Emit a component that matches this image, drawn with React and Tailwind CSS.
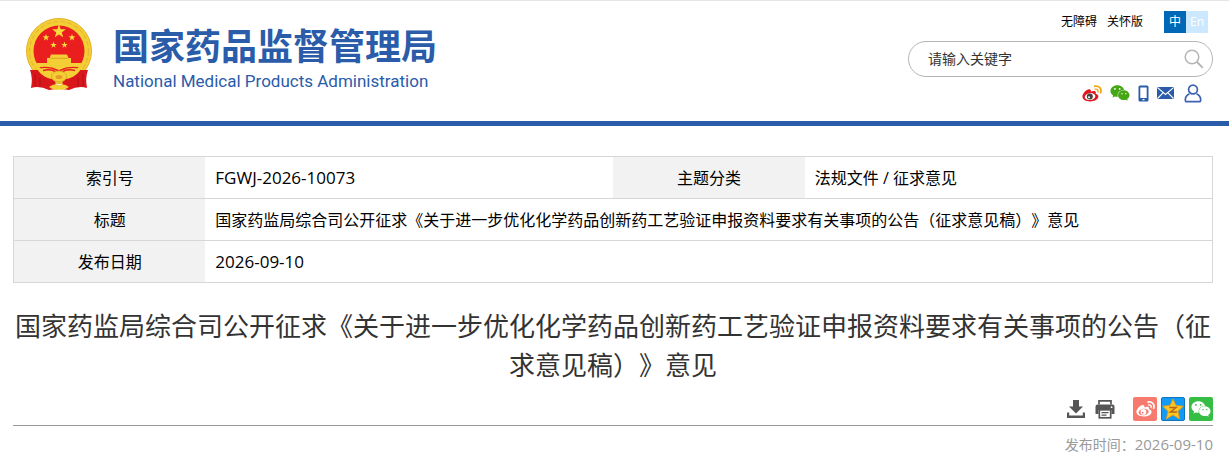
import { FaWeixin } from 'react-icons/fa';

const TITLE = '国家药监局综合司公开征求《关于进一步优化化学药品创新药工艺验证申报资料要求有关事项的公告（征求意见稿）》意见';

const starPoints = (cx, cy, r) =>
  Array.from({ length: 10 }, (_, i) => {
    const radius = i % 2 === 0 ? r : r * 0.4;
    const angle = (Math.PI / 5) * i - Math.PI / 2;
    return `${(cx + radius * Math.cos(angle)).toFixed(2)},${(cy + radius * Math.sin(angle)).toFixed(2)}`;
  }).join(' ');

const Emblem = () => (
  <svg viewBox="0 0 68 74" className="w-[68px] h-[74px] shrink-0" aria-hidden="true">
    <circle cx="34" cy="34" r="32.5" fill="#f3cf35" stroke="#e3b02a" strokeWidth="1" />
    <circle cx="34" cy="34" r="29.5" fill="none" stroke="#e6b92f" strokeWidth="1.2" strokeDasharray="5 2" />
    <circle cx="34" cy="34" r="25.5" fill="#ea1d1f" />
    <polygon points={starPoints(34, 14.5, 7.2)} fill="#f9da3b" />
    <polygon points={starPoints(21, 20.5, 3.6)} fill="#f9da3b" />
    <polygon points={starPoints(47, 20.5, 3.6)} fill="#f9da3b" />
    <polygon points={starPoints(28.5, 28, 3.4)} fill="#f9da3b" />
    <polygon points={starPoints(39.5, 28, 3.4)} fill="#f9da3b" />
    <path d="M26 37.5 H42 L43.5 41 H46 V46 H22 V41 H24.5 Z" fill="#f3cf35" />
    <path d="M25 41.3 H43" stroke="#d9961f" strokeWidth="0.8" />
    <path d="M12 46 H56 V50.5 Q44 48 34 53 Q24 48 12 50.5 Z" fill="#f3cf35" />
    <path d="M12 52 Q24 49.5 32 54 L36 54 Q44 49.5 56 52 L50 62 H18 Z" fill="#f3cf35" />
    <path d="M18 53.5 Q26 51.5 31 55 M50 53.5 Q42 51.5 37 55" fill="none" stroke="#ea1d1f" strokeWidth="1.4" />
    <path d="M5 53 L13 53 Q17 60 30 61 L31 72 L24 73 Q14 68 6 71 Q8 61 5 53 Z" fill="#d9161c" />
    <path d="M63 53 L55 53 Q51 60 38 61 L37 72 L44 73 Q54 68 62 71 Q60 61 63 53 Z" fill="#d9161c" />
    <path d="M14 53 Q20 61 30 61 M54 53 Q48 61 38 61" fill="none" stroke="#f3cf35" strokeWidth="2.2" />
    <ellipse cx="34" cy="59.5" rx="7.5" ry="5.5" fill="#f3cf35" stroke="#dca51f" strokeWidth="0.9" />
    <ellipse cx="34" cy="60" rx="3.5" ry="2" fill="#e89a26" />
    <path d="M10 57 V69 M15 60 V70 M58 57 V69 M53 60 V70" stroke="#a90e14" strokeWidth="0.9" />
    <path d="M24 70 Q29 66 34 68 Q39 66 44 70 Q39 74 34 72.5 Q29 74 24 70 Z" fill="#f3cf35" />
  </svg>
);

const WeiboIcon = ({ className, body, face, eye, wave }) => (
  <svg viewBox="0 0 24 20" className={className} aria-hidden="true">
    <path
      d="M9.8 5.2C11 6 10.8 7 10.5 8C13 7 16 6.5 16.5 8.5C16.7 9.3 16.5 9.9 16.3 10.4C18.5 11 20 12.2 19.6 14.3C18.9 17.5 14.5 19.5 9.8 19.5C4.5 19.5 0.5 17.3 0.5 13.6C0.5 10 6.5 3.5 9.8 5.2Z"
      fill={body}
    />
    <ellipse cx="9.7" cy="13.7" rx="6.4" ry="4.1" transform="rotate(-8 9.7 13.7)" fill={face} />
    <circle cx="9.4" cy="13.7" r="3.6" fill={eye} />
    <circle cx="8.4" cy="14.6" r="1.2" fill={face} />
    <path d="M15.3 1.3C20.5 0.2 24 4.5 22.3 9" fill="none" stroke={wave} strokeWidth="2.2" strokeLinecap="round" />
    <path d="M15.8 4.8C18.4 4.3 19.7 6 19.1 8.2" fill="none" stroke={wave} strokeWidth="1.7" strokeLinecap="round" />
  </svg>
);

const PhoneIcon = () => (
  <svg viewBox="0 0 11 17" className="w-[11px] h-[17px]" aria-hidden="true">
    <rect x="0.5" y="0.5" width="10" height="16" rx="1.5" fill="#2a5caa" />
    <rect x="2.3" y="2.5" width="6.4" height="10.5" fill="#fff" />
    <rect x="4.5" y="14" width="2" height="1.3" fill="#fff" />
  </svg>
);

const MailIcon = () => (
  <svg viewBox="0 0 17 12" className="w-[17px] h-3" aria-hidden="true">
    <rect width="17" height="12" rx="1" fill="#2a5caa" />
    <path d="M0.5 0.7L8.5 7.5L16.5 0.7M0.5 11.5L6 5.8M16.5 11.5L11 5.8" fill="none" stroke="#fff" strokeWidth="1.1" />
  </svg>
);

const UserIcon = () => (
  <svg viewBox="0 0 18 19" className="w-[18px] h-[19px]" fill="none" stroke="#3f62b0" strokeWidth="1.7" aria-hidden="true">
    <circle cx="9" cy="5.5" r="4.4" />
    <path d="M5.5 9.8C2.8 11 1.3 13.2 1.3 16Q1.3 17.7 3 17.7H15Q16.7 17.7 16.7 16C16.7 13.2 15.2 11 12.5 9.8" />
  </svg>
);

const SearchIcon = () => (
  <svg viewBox="0 0 20 20" className="size-5" fill="none" stroke="#b5b5b5" strokeWidth="1.5" aria-hidden="true">
    <circle cx="8" cy="8" r="6.8" />
    <path d="M13 13L18.8 18.8" strokeWidth="1.9" />
  </svg>
);

const DownloadIcon = () => (
  <svg viewBox="0 0 20 20" className="size-5" fill="#555" aria-hidden="true">
    <path d="M7 1H13V7.5H17L10 14.5L3 7.5H7Z" />
    <path d="M1 13.5H3.2V16.5H16.8V13.5H19V19H1Z" />
  </svg>
);

const PrintIcon = () => (
  <svg viewBox="0 0 20 20" className="size-5" aria-hidden="true">
    <path d="M4 5.5V1.8H16V5.5" fill="#fff" stroke="#555" strokeWidth="1.7" />
    <path d="M2.5 5.5H17.5Q19.5 5.5 19.5 7.5V15H16.5V11H3.5V15H0.5V7.5Q0.5 5.5 2.5 5.5Z" fill="#555" />
    <rect x="4.3" y="10.8" width="11.4" height="8" fill="#fff" stroke="#555" strokeWidth="1.7" />
    <path d="M6.5 13.6H13.5M6.5 16.2H11.5" stroke="#555" strokeWidth="1.3" />
    <circle cx="16.6" cy="8.2" r="0.9" fill="#fff" />
  </svg>
);

const QzoneIcon = () => (
  <svg viewBox="0 0 24 24" className="size-6" aria-hidden="true">
    <rect x="0.5" y="0.5" width="23" height="23" rx="1.5" fill="#129af5" stroke="#0d74c0" />
    <polygon
      points="12,2 15,8.5 22.3,9.2 16.9,14.3 18.7,22 12,18 5.3,22 7.1,14.3 1.7,9.2 9,8.5"
      fill="#fdc721"
      stroke="#e59a1c"
      strokeWidth="0.9"
      strokeLinejoin="round"
    />
    <path d="M8.3 10.5H15L9.5 15H16" fill="none" stroke="#b9651b" strokeWidth="1.5" />
  </svg>
);

const Header = () => (
  <header className="flex items-start justify-between border-t border-t-[#e5e5e5] border-b-[5px] border-b-[#2a5caa] pl-[25px] pr-4 pb-4">
    <a href="#" className="flex items-start gap-5 pt-4 text-[#2a5caa]">
      <Emblem />
      <span className="flex flex-col pt-2">
        <span className="text-[36px] leading-[44px] font-bold whitespace-nowrap">国家药品监督管理局</span>
        <span className="font-['Roboto',sans-serif] text-[17px] leading-6 whitespace-nowrap">
          National Medical Products Administration
        </span>
      </span>
    </a>

    <div className="flex flex-col items-end pt-[10px]">
      <div className="flex items-center pr-[5px] text-xs">
        <a href="#" className="mr-[10px]">无障碍</a>
        <a href="#" className="mr-[21px]">关怀版</a>
        <button type="button" className="size-[22px] bg-[#0068b7] text-white">中</button>
        <button type="button" className="size-[22px] bg-[#cce8ff] text-white">En</button>
      </div>
      <form className="mt-2 flex h-9 w-[305px] items-center rounded-full border border-[#b5b5b5] pl-[19px] pr-2">
        <input
          type="text"
          aria-label="关键字"
          placeholder="请输入关键字"
          className="min-w-0 flex-1 text-sm outline-none placeholder:text-[#333]"
        />
        <button type="button" aria-label="搜索">
          <SearchIcon />
        </button>
      </form>
      <div className="mt-1 flex h-6 items-center gap-2 pr-[11px]">
        <a href="#" aria-label="微博">
          <WeiboIcon className="w-5 h-[17px]" body="#e1161d" face="#fff" eye="#444" wave="#f3a81c" />
        </a>
        <a href="#" aria-label="微信">
          <FaWeixin className="size-5 text-[#45a714]" />
        </a>
        <a href="#" aria-label="手机版">
          <PhoneIcon />
        </a>
        <a href="#" aria-label="邮箱">
          <MailIcon />
        </a>
        <a href="#" aria-label="个人中心" className="ml-[2px]">
          <UserIcon />
        </a>
      </div>
    </div>
  </header>
);

const InfoTable = () => (
  <table className="w-full table-fixed border border-[#d7d7d7] text-base text-black">
    <colgroup>
      <col className="w-[16%]" />
      <col className="w-[34%]" />
      <col className="w-[16%]" />
      <col className="w-[34%]" />
    </colgroup>
    <tbody>
      <tr className="h-[42px] border-b border-[#d7d7d7]">
        <th scope="row" className="bg-[#f2f2f2] font-normal">索引号</th>
        <td className="px-[10px] text-[17px] leading-6">FGWJ-2026-10073</td>
        <th scope="row" className="bg-[#f2f2f2] font-normal">主题分类</th>
        <td className="px-[10px]">法规文件 / 征求意见</td>
      </tr>
      <tr className="h-[42px] border-b border-[#d7d7d7]">
        <th scope="row" className="bg-[#f2f2f2] font-normal">标题</th>
        <td colSpan={3} className="px-[10px]">{TITLE}</td>
      </tr>
      <tr className="h-[42px]">
        <th scope="row" className="bg-[#f2f2f2] font-normal">发布日期</th>
        <td colSpan={3} className="px-[10px] text-[17px] leading-6">2026-09-10</td>
      </tr>
    </tbody>
  </table>
);

const ShareBar = () => (
  <div className="flex items-center justify-end border-b border-[#999] pb-1">
    <button type="button" aria-label="下载" className="mr-[9px]">
      <DownloadIcon />
    </button>
    <button type="button" aria-label="打印" className="mr-[18px]">
      <PrintIcon />
    </button>
    <div className="flex gap-1">
      <a href="#" aria-label="分享到微博" className="flex size-6 items-center justify-center rounded-xs bg-[#f67a6e]">
        <WeiboIcon className="w-[19px] h-4" body="#fff" face="#f67a6e" eye="#fff" wave="#fff" />
      </a>
      <a href="#" aria-label="分享到QQ空间">
        <QzoneIcon />
      </a>
      <a href="#" aria-label="分享到微信" className="flex size-6 items-center justify-center rounded-xs bg-[#36bd43]">
        <FaWeixin className="size-5 text-white" />
      </a>
    </div>
  </div>
);

export default function App() {
  return (
    <div className="bg-white font-['Open_Sans','Noto_Sans_CJK_SC',sans-serif] text-black [text-spacing-trim:space-all]">
      <Header />
      <main className="px-4 pt-[30px] pl-[13px]">
        <InfoTable />
        <h1 className="mt-6 text-center text-[26px] leading-[39px] text-[#333]">{TITLE}</h1>
        <div className="mt-3">
          <ShareBar />
        </div>
        <p className="mt-[6px] text-right text-sm leading-6 text-[#999]">
          发布时间：<span className="text-[15px]">2026-09-10</span>
        </p>
      </main>
    </div>
  );
}
